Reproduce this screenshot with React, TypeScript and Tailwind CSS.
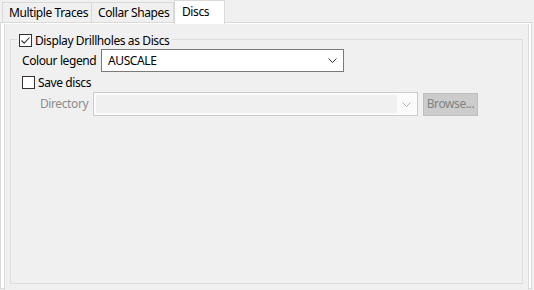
import React from 'react';

const Check: React.FC<{ checked?: boolean }> = ({ checked }) => (
  <span className="flex h-[13px] w-[13px] shrink-0 items-center justify-center border border-[#333333] bg-white">
    {checked && (
      <svg width="11" height="11" viewBox="0 0 11 11">
        <path d="M1.5 5.5 L4.2 8.2 L9.5 2.5" fill="none" stroke="#333333" strokeWidth="1.1" />
      </svg>
    )}
  </span>
);

const Chevron: React.FC<{ color: string }> = ({ color }) => (
  <svg width="9" height="5" viewBox="0 0 9 5">
    <path d="M0.5 0.5 L4.5 4.5 L8.5 0.5" fill="none" stroke={color} strokeWidth="1" />
  </svg>
);

export default function App() {
  return (
    <div
      className="relative h-[290px] w-[534px] overflow-hidden whitespace-nowrap bg-[#f0f0f0] text-[12px] leading-none tracking-[-0.4px] text-black"
      style={{ fontFamily: '"Segoe UI", "Noto Sans", sans-serif' }}
    >
      {/* tabs */}
      <div className="flex h-[22px] items-end pl-[2px]">
        <div className="flex h-[20px] w-[90px] items-center border border-b-0 border-[#d9d9d9] bg-[#f0f0f0] pl-[6px] pt-[1px]">
          Multiple Traces
        </div>
        <div className="flex h-[20px] w-[82px] items-center border border-b-0 border-l-0 border-[#d9d9d9] bg-[#f0f0f0] pl-[6px] pt-[1px]">
          Collar Shapes
        </div>
        <div className="relative z-10 -mb-[2px] flex h-[24px] w-[51px] items-start border border-b-0 border-[#d9d9d9] bg-white pl-[7px] pt-[5px]">
          Discs
        </div>
      </div>

      {/* tab body */}
      <div className="h-[267px] w-[532px] border border-[#d9d9d9] bg-white pl-[3px] pr-[2px] pt-[1px]">
        <div className="h-[270px] border-x border-[#dadada] bg-[#f0f0f0] pl-[5px] pr-[5px] pt-[15px]">
          <div className="h-[245px] border border-[#dcdcdc]">
            <div className="-mt-[6px] ml-[6px] flex w-fit items-center gap-[3px] bg-[#f0f0f0] pl-[2px] pr-[3px]">
              <Check checked />
              <span>Display Drillholes as Discs</span>
            </div>

            <div className="ml-[11px] mt-[2px] flex items-center">
              <span className="w-[79px]">Colour legend</span>
              <div className="flex h-[23px] w-[243px] items-center justify-between border border-[#7a7a7a] bg-white pl-[6px] pr-[6px]">
                <span>AUSCALE</span>
                <Chevron color="#333333" />
              </div>
            </div>

            <div className="ml-[11px] mt-[4px] flex items-center gap-[3px]">
              <Check />
              <span>Save discs</span>
            </div>

            <div className="ml-[29px] mt-[3px] flex items-center">
              <span className="w-[53px] text-[#8c8c8c]">Directory</span>
              <div className="flex h-[24px] w-[325px] items-center border border-[#cccccc] bg-[#fbfbfb] p-[2px]">
                <div className="h-full flex-1 bg-[#f0f0f0]" />
                <div className="flex w-[18px] items-center justify-center">
                  <Chevron color="#b4b4b4" />
                </div>
              </div>
              <div className="ml-[5px] flex h-[23px] w-[55px] items-center justify-center border border-[#bfbfbf] bg-[#cccccc] text-[#838383]">
                Browse...
              </div>
            </div>
          </div>
        </div>
      </div>
    </div>
  );
}
